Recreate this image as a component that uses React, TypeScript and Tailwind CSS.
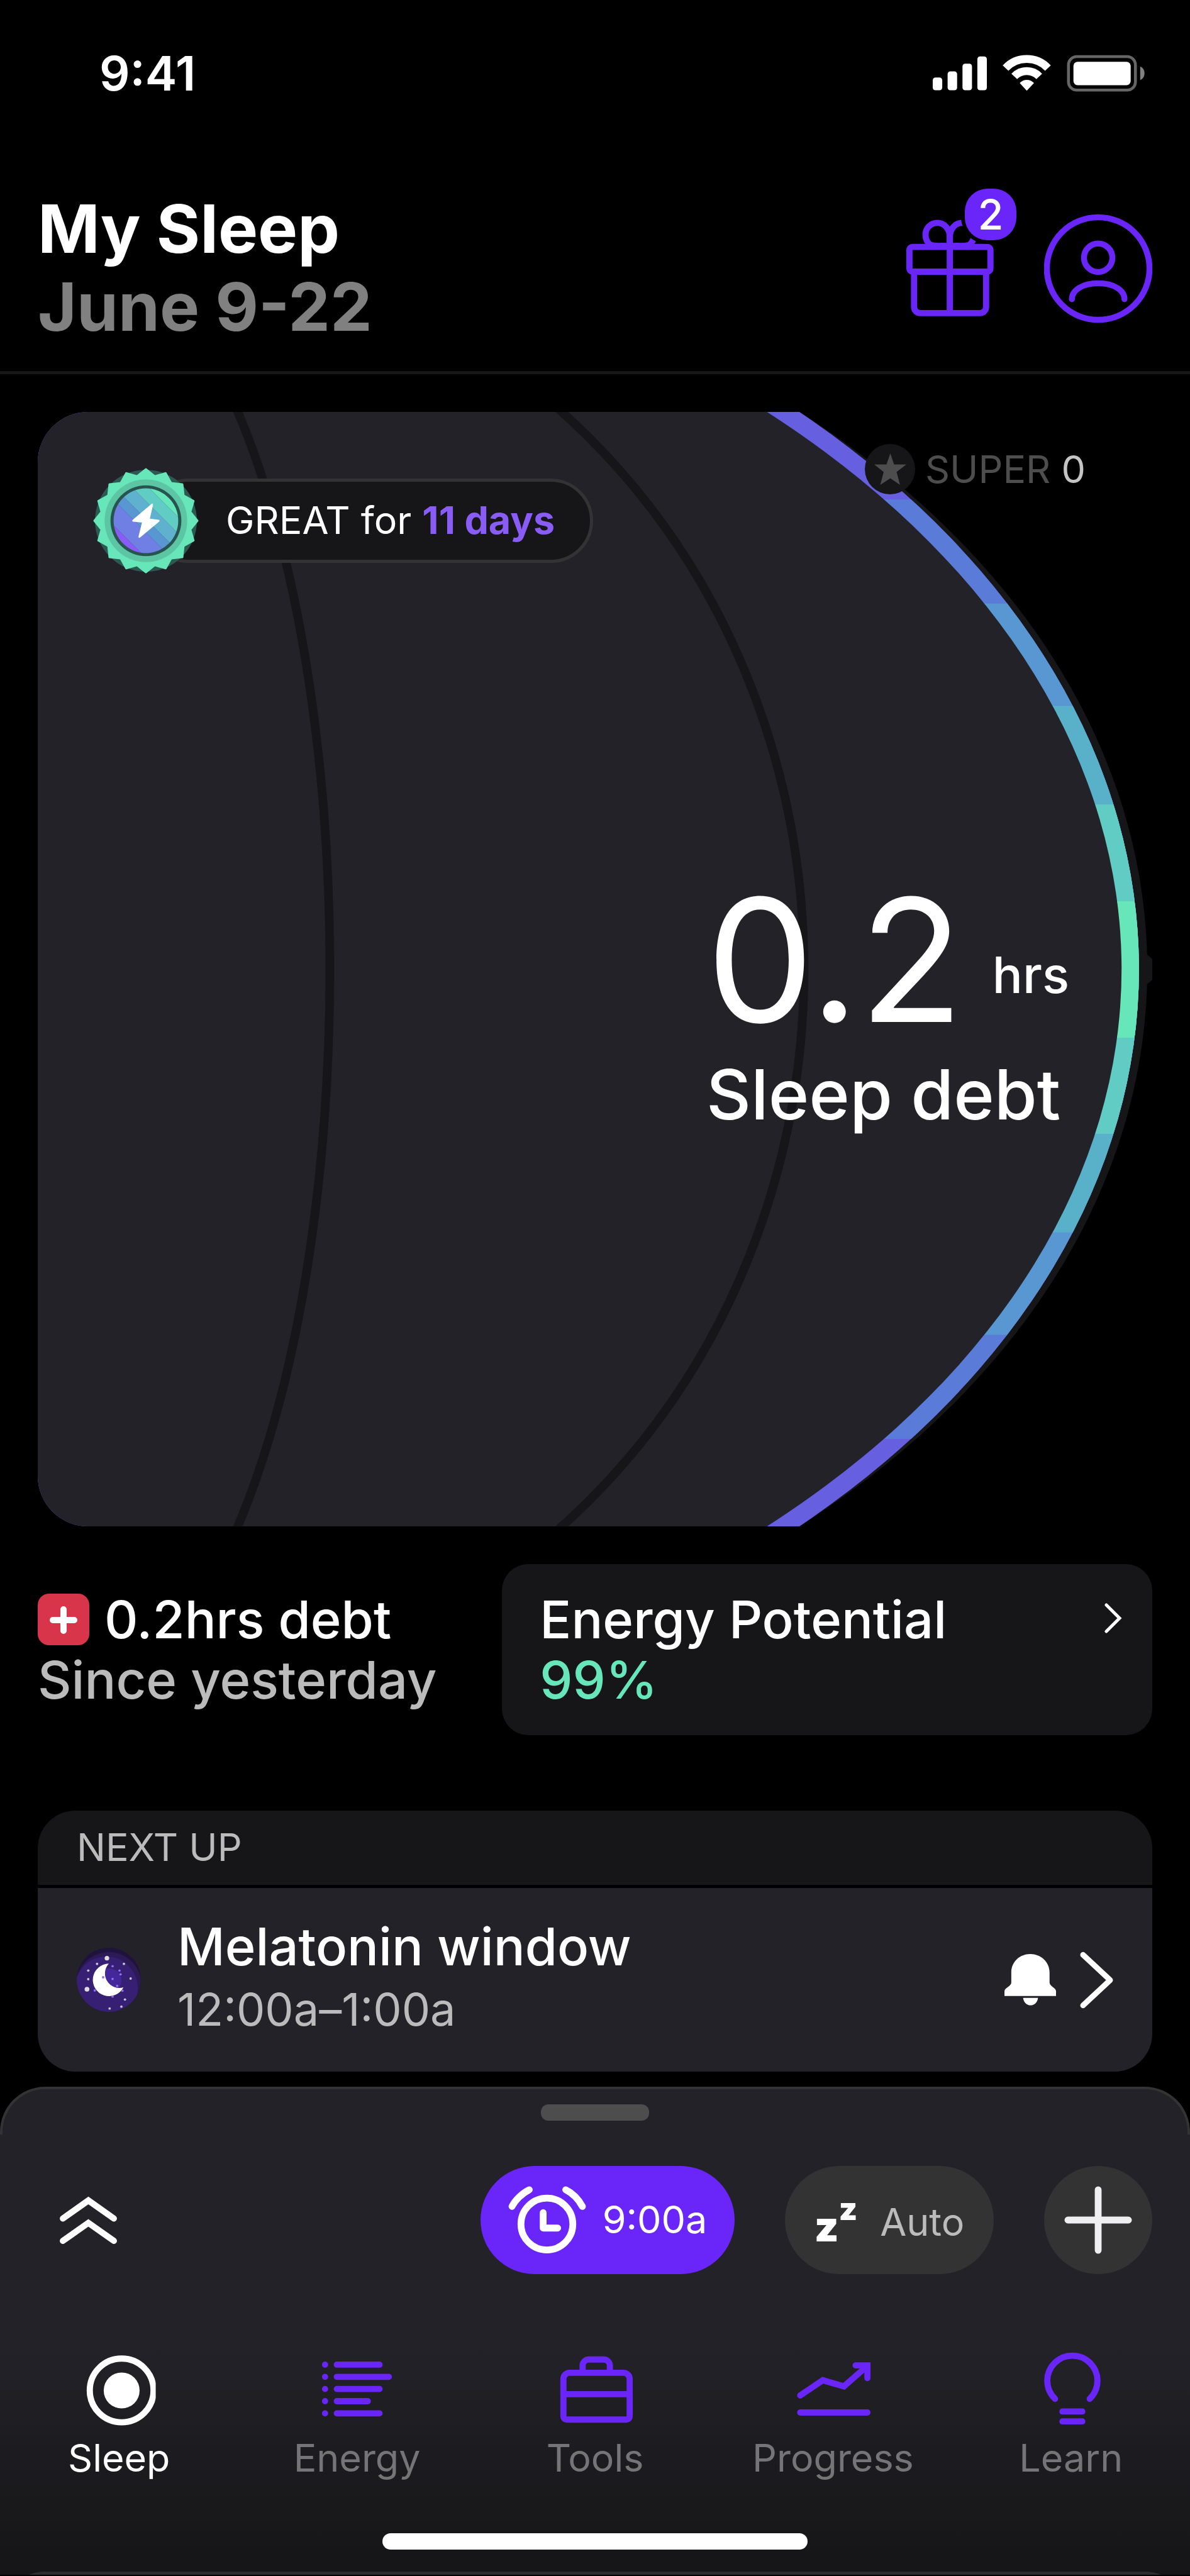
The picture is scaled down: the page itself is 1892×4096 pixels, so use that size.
const bands = [
  { y: 0, h: 1797, color: "#665fe0" },
  { y: 141, h: 1515, color: "#5a7bd8" },
  { y: 309, h: 1179, color: "#5897d2" },
  { y: 474, h: 849, color: "#58b1c9" },
  { y: 633, h: 531, color: "#60ccc4" },
  { y: 789, h: 220, color: "#67e6ba" },
];

function StatusIcons() {
  return (
    <svg viewBox="70 80 1035 185" className="w-[340px] h-[61px]" aria-hidden="true">
      <g fill="#fff">
        <rect x="76" y="193" width="46" height="62" rx="13" />
        <rect x="148" y="163" width="46" height="92" rx="13" />
        <rect x="220" y="126" width="46" height="129" rx="13" />
        <rect x="292" y="91" width="46" height="164" rx="13" />
        <path d="M497 220 C514 199 549 199 566 220 L531 257 Z" />
        <rect x="757" y="117" width="277" height="113" rx="20" />
      </g>
      <g fill="none" stroke="#fff" strokeWidth="38">
        <path d="M428.4 147.6 A141.5 141.5 0 0 1 633.6 147.6" />
        <path d="M470.5 187.5 A83.5 83.5 0 0 1 591.5 187.5" />
      </g>
      <rect x="733" y="92" width="324" height="162" rx="40" fill="none" stroke="#666" strokeWidth="14" />
      <path d="M1080 140 C1108 150 1108 195 1080 205 Z" fill="#808080" />
    </svg>
  );
}

function GiftIcon() {
  return (
    <svg viewBox="0 0 178 206" className="w-full h-full" fill="none" stroke="#6a25f8" strokeWidth="10" aria-hidden="true">
      <rect x="5" y="94" width="131" height="40" rx="5" />
      <path d="M12.5 136 V191 a10 10 0 0 0 10 10 H119 a10 10 0 0 0 10 -10 V136" />
      <path d="M70.3 78 V201" />
      <path d="M70.3 94 V78 C70 64 61 55 50.5 55 C39 55 31 63.5 31 74.5 C31 82 35 89 40 91 C50 94 60 91 70.3 93" />
      <path d="M70.3 94 V78 C70.6 64 79.6 55 90 55 C101.6 55 109.6 63.5 109.6 74.5 C109.6 82 105.6 89 100.6 91 C90 94 80 91 70.3 93" />
    </svg>
  );
}

function ProfileIcon() {
  return (
    <svg viewBox="0 0 174 177" className="w-full h-full" fill="none" stroke="#6a25f8" strokeWidth="9.6" aria-hidden="true">
      <circle cx="87" cy="88.5" r="83" />
      <circle cx="87" cy="71" r="23" />
      <path d="M44.5 138 C44.5 124 61 112.3 87 112.3 S129.5 124 129.5 138" strokeLinecap="round" />
    </svg>
  );
}

function DebtDial() {
  return (
    <svg viewBox="0 0 1797 1797" className="absolute inset-0 w-full h-full" aria-hidden="true">
      <defs>
        <clipPath id="arc">
          <ellipse cx="-27.5" cy="898.5" rx="1803" ry="1252" />
        </clipPath>
      </defs>
      <ellipse cx="166" cy="898.5" rx="1623" ry="1188" fill="#161618" />
      <path d="M1785 872 L1797 882 V916 L1785 925 Z" fill="#161618" />
      <g clipPath="url(#arc)">
        {bands.map((band) => (
          <rect key={band.color} x="0" y={band.y} width="1797" height={band.h} fill={band.color} />
        ))}
      </g>
      <ellipse cx="-95.5" cy="898.5" rx="1843" ry="1241" fill="#232228" />
      <g fill="none" stroke="#161618" strokeWidth="14">
        <ellipse cx="67" cy="898.5" rx="404" ry="1160" />
        <ellipse cx="172.5" cy="898.5" rx="1063" ry="1160" />
      </g>
    </svg>
  );
}

function StreakBadge() {
  const spikes = Array.from({ length: 32 }, (_, i) => {
    const r = i % 2 === 0 ? 83 : 73;
    const a = (i * Math.PI) / 16;
    return `${85 + r * Math.sin(a)},${85 - r * Math.cos(a)}`;
  }).join(" ");

  return (
    <svg viewBox="0 0 170 170" className="relative z-10 w-[168px] h-[168px] shrink-0" aria-hidden="true">
      <defs>
        <clipPath id="disc">
          <circle cx="85" cy="85" r="52" />
        </clipPath>
      </defs>
      <circle cx="85" cy="85" r="82" fill="#2c5a53" />
      <polygon points={spikes} fill="#67e6ba" stroke="#67e6ba" strokeWidth="3" strokeLinejoin="round" />
      <circle cx="85" cy="85" r="66.5" fill="#5cc5a3" />
      <circle cx="85" cy="85" r="57" fill="#27544f" />
      <g clipPath="url(#disc)">
        <g transform="rotate(45 85 85)">
          <rect x="30" y="30" width="110" height="14" fill="#67e6ba" />
          <rect x="30" y="44" width="110" height="19" fill="#60ccc4" />
          <rect x="30" y="63" width="110" height="20" fill="#60b0d0" />
          <rect x="30" y="83" width="110" height="15" fill="#5897d2" />
          <rect x="30" y="98" width="110" height="29" fill="#6f7fe4" />
          <rect x="30" y="127" width="110" height="14" fill="#8a5cf6" />
        </g>
      </g>
      <path d="M95 59 L64.500 85 L80.500 86.500 L74.500 111 L105.500 85 L89.500 83 Z" fill="#fff" stroke="#fff" strokeWidth="3" strokeLinejoin="round" />
    </svg>
  );
}

function MoonIcon() {
  const white = [[32.3, 25.7], [75, 25.7], [18.3, 36.3], [18.3, 50], [85.7, 49], [76.7, 82.3], [71, 93.7], [52.3, 96.7]];
  const violet = [[57, 29.3], [68, 36.3], [69.7, 42.3], [57, 49.7], [64.3, 60.7], [72.7, 68.3], [57, 77.7], [28.7, 68], [42, 47]];

  return (
    <svg viewBox="0 0 102 102" className="w-[102px] h-[102px] shrink-0" aria-hidden="true">
      <defs>
        <clipPath id="sky">
          <circle cx="51" cy="51" r="51" />
        </clipPath>
      </defs>
      <g clipPath="url(#sky)">
        <rect width="102" height="102" fill="#20123f" />
        <circle cx="51" cy="59" r="52" fill="#2b1a54" />
        <circle cx="47" cy="64" r="50" fill="#371f74" />
        <circle cx="52" cy="52" r="19" fill="#45279c" />
      </g>
      <path d="M51 25.300 A25.800 25.800 0 1 0 74.300 63 A23 23 0 0 1 51 25.300 Z" fill="#fff" />
      <circle cx="48" cy="16.700" r="3.600" fill="#ddd" />
      <circle cx="16.300" cy="66" r="3.800" fill="#ddd" />
      {white.map(([x, y]) => (
        <circle key={`${x}-${y}`} cx={x} cy={y} r="1.900" fill="#c9c6cf" />
      ))}
      {violet.map(([x, y]) => (
        <circle key={`${x}-${y}`} cx={x} cy={y} r="1.900" fill="#8a6cf5" />
      ))}
    </svg>
  );
}

const tabs = [
  {
    label: "Sleep",
    icon: (
      <>
        <clipPath id="ring">
          <rect width="123.500" height="128" />
        </clipPath>
        <circle cx="68.5" cy="66" r="51.5" stroke="#fff" clipPath="url(#ring)" />
        <circle cx="68.5" cy="66" r="29" fill="#fff" stroke="none" />
      </>
    ),
  },
  {
    label: "Energy",
    icon: (
      <>
        <path d="M31 24.3 H100 M31 44 H115 M31 63.6 H100 M31 83.3 H81 M31 103 H100" />
        <path d="M12 24.3 h.01 M12 44 h.01 M12 63.6 h.01 M12 83.3 h.01 M12 103 h.01" />
      </>
    ),
  },
  {
    label: "Tools",
    icon: (
      <>
        <path d="M23 37.500 H110 a10 10 0 0 1 10 10 V108 a5 5 0 0 1 -5 5 H18 a5 5 0 0 1 -5 -5 V47.500 a10 10 0 0 1 10 -10 Z" />
        <path d="M13 72 H120" />
        <path d="M44 36 V26 a10 10 0 0 1 10 -10 H78 a10 10 0 0 1 10 10 V36" />
      </>
    ),
  },
  {
    label: "Progress",
    icon: (
      <>
        <path d="M11.500 74 L48 49.500 L82 59.500 L119 27" />
        <path d="M101 25.500 H120 V46" strokeLinejoin="miter" />
        <path d="M11.500 101.600 H120" />
      </>
    ),
  },
  {
    label: "Learn",
    icon: (
      <>
        <path d="M38 79.500 A40.500 40.500 0 1 1 94 79.500" />
        <path d="M50 100 H82 M50 116 H82" />
      </>
    ),
  },
];

export default function App() {
  return (
    <div className="min-h-screen bg-black text-white font-['Inter',sans-serif]">
      <div className="flex h-[232px] items-center justify-between pl-[158px] pr-[71px]">
        <span className="text-[76px] leading-none font-semibold">9:41</span>
        <StatusIcons />
      </div>

      <header className="flex h-[363px] items-start justify-between border-b-[5px] border-[#171719] px-[60px] pt-[68px]">
        <div className="pt-[2px] text-[106px] leading-[124px] font-bold">
          <h1>My Sleep</h1>
          <p className="text-[#808080]">June 9-22</p>
        </div>
        <div className="flex items-start gap-[44px]">
          <button className="relative h-[203px] w-[175px]" aria-label="Gifts">
            <GiftIcon />
            <span className="absolute top-0 right-0 flex h-[82px] w-[82px] items-center justify-center rounded-[36px] bg-[#6a25f8] text-[66px] leading-none font-medium ring-6 ring-black">2</span>
          </button>
          <button className="mt-[40px] h-[174px] w-[172px]" aria-label="Profile">
            <ProfileIcon />
          </button>
        </div>
      </header>

      <main className="px-[60px] pt-[60px]">
        <section className="relative aspect-square overflow-hidden rounded-[80px]">
          <DebtDial />
          <div className="relative flex items-start justify-between pt-[51px] pr-[106px] pl-[88px]">
            <div className="mt-[38px] flex items-center">
              <StreakBadge />
              <p className="-ml-[84px] flex h-[134px] items-center rounded-full border-[5px] border-[#333] bg-[#161618] pr-[56px] pl-[122px] text-[61px] whitespace-pre">
                GREAT for <b className="font-bold text-[#8a5cf6]">11 days</b>
              </p>
            </div>
            <p className="flex items-center gap-[16px] text-[61px] leading-[80px] text-[#4d4d4d]">
              <svg viewBox="0 0 80 80" className="h-[80px] w-[80px]" aria-hidden="true">
                <circle cx="40" cy="40" r="40" fill="#161618" />
                <path d="M40.500 15 L46.500 32.500 H66 L50.500 44.500 L56 65 L40.500 54.500 L24.500 65 L30 44.500 L15 32.500 H34.500 Z" fill="#4d4d4d" />
              </svg>
              <span>
                SUPER <span className="text-[#c4c4c4]">0</span>
              </span>
            </p>
          </div>
          <div className="relative mt-[486px] mr-[132px] ml-auto w-fit">
            <div className="flex items-end gap-[46px]">
              <span className="text-[272px] leading-[256px]">0.2</span>
              <span className="mb-[56px] text-[80px] leading-[96px] font-medium">hrs</span>
            </div>
            <p className="mt-[24px] text-[110px] leading-[124px] font-medium">Sleep debt</p>
          </div>
        </section>

        <section className="mt-[60px] grid grid-cols-[5fr_7fr] text-[83px] leading-[96px] font-medium">
          <div className="pt-[40px]">
            <p className="flex items-center gap-[24px]">
              <svg viewBox="0 0 82 82" className="h-[82px] w-[82px]" aria-hidden="true">
                <rect width="82" height="82" rx="18" fill="#d8354b" />
                <path d="M41 25 V59 M24 42 H58" stroke="#fff" strokeWidth="10" strokeLinecap="round" />
              </svg>
              0.2hrs debt
            </p>
            <p className="text-[#bbb]">Since yesterday</p>
          </div>
          <button className="flex h-[272px] items-start justify-between rounded-[42px] bg-[#161618] pt-[40px] pr-[48px] pl-[60px] text-left">
            <span>
              Energy Potential
              <span className="block text-[#67e6ba]">99%</span>
            </span>
            <svg viewBox="0 0 28 96" className="h-[96px] w-[28px]" fill="none" stroke="#fff" strokeWidth="5" strokeLinecap="round" aria-hidden="true">
              <path d="M3 25 L24 46 L3 67" />
            </svg>
          </button>
        </section>

        <section className="mt-[120px] overflow-hidden rounded-[60px]">
          <h2 className="flex h-[118px] items-center bg-[#161618] px-[62px] text-[61px] text-[#bbb]">NEXT UP</h2>
          <div className="mt-[5px] flex h-[292px] items-center bg-[#232228] px-[62px]">
            <MoonIcon />
            <div className="ml-[58px] flex-1 pb-[6px] leading-[100px]">
              <h3 className="text-[83px] font-medium">Melatonin window</h3>
              <p className="text-[72px] text-[#bbb]">12:00a–1:00a</p>
            </div>
            <button aria-label="Reminder">
              <svg viewBox="0 0 83 83" className="h-[82px] w-[82px]" fill="#fff" aria-hidden="true">
                <path d="M41.5 0 C58 0 72.6 12 72.6 30 V46 C72.6 52 83 54 83 60 V67.5 H0 V60 C0 54 11 52 11 46 V30 C11 12 25 0 41.5 0 Z" />
                <path d="M30 70.5 H54 C53 78 48 82.5 42 82.5 S31 78 30 70.5 Z" />
              </svg>
            </button>
            <button className="ml-[38px]" aria-label="Open">
              <svg viewBox="0 0 54 92" className="h-[91px] w-[53px]" fill="none" stroke="#fff" strokeWidth="9" strokeLinecap="round" strokeLinejoin="round" aria-hidden="true">
                <path d="M5 5 L49 46 L5 87" />
              </svg>
            </button>
          </div>
        </section>
      </main>

      <footer className="mt-[24px]">
        <div className="h-[76px] rounded-t-[72px] border-x-4 border-t-4 border-[#333] bg-[#232228] pt-[24px]">
          <div className="mx-auto h-[26px] w-[172px] rounded-[12px] bg-[#4d4d4d]" />
        </div>
        <div className="bg-linear-to-b from-[#232228] from-48% to-[#161618] to-96% pt-[50px]">
          <div className="flex items-center gap-[80px] px-[60px] text-[61px]">
            <button className="mr-auto ml-[34px]" aria-label="Expand">
              <svg viewBox="0 0 94 78" className="h-[77px] w-[93px]" fill="none" stroke="#fff" strokeWidth="10" strokeLinecap="round" aria-hidden="true">
                <path d="M6 36 L47 7 L88 36" />
                <path d="M6 72 L47 43 L88 72" />
              </svg>
            </button>
            <button className="flex h-[172px] w-[404px] items-center justify-center gap-[26px] rounded-full bg-[#6a25f8]">
              <svg viewBox="0 0 126 110" className="h-[108px] w-[124px]" fill="none" stroke="#fff" strokeWidth="11" strokeLinecap="round" strokeLinejoin="round" aria-hidden="true">
                <circle cx="62.5" cy="61.5" r="42" />
                <path d="M6 33 C11 23 22 12 34 6 M93 6 C105 12 114 22 120 33" />
                <path d="M56.500 43 V68 H80" />
              </svg>
              9:00a
            </button>
            <button className="flex h-[172px] w-[332px] items-center justify-center gap-[36px] rounded-full bg-[#333] text-[#bbb]">
              <span className="flex items-start font-black text-white" aria-hidden="true">
                <span className="mt-[20px] text-[66px] leading-[64px]">z</span>
                <span className="text-[50px] leading-[48px]">z</span>
              </span>
              <span className="pt-[8px]">Auto</span>
            </button>
            <button className="flex h-[172px] w-[172px] items-center justify-center rounded-full bg-[#333]" aria-label="Add">
              <svg viewBox="0 0 110 110" className="h-[108px] w-[108px]" stroke="#efeff1" strokeWidth="11" strokeLinecap="round" aria-hidden="true">
                <path d="M55 6 V104 M6 55 H104" />
              </svg>
            </button>
          </div>

          <nav className="mt-[120px] grid grid-cols-5 text-[61px] leading-[72px] text-[#757577]">
            {tabs.map((tab, index) => (
              <a key={tab.label} href="#" className={index === 0 ? "flex flex-col items-center gap-[10px] text-white" : "flex flex-col items-center gap-[10px]"}>
                <svg viewBox="0 0 128 128" className="h-[126px] w-[126px]" fill="none" stroke="#6a25f8" strokeWidth="10" strokeLinecap="round" aria-hidden="true">
                  {tab.icon}
                </svg>
                {tab.label}
              </a>
            ))}
          </nav>

          <div className="mx-auto mt-[84px] h-[26px] w-[676px] rounded-[13px] bg-white" />
          <div className="mt-[35px] h-[5px] overflow-hidden">
            <div className="h-[76px] rounded-t-[72px] bg-[#2d2d2f]" />
          </div>
        </div>
      </footer>
    </div>
  );
}
